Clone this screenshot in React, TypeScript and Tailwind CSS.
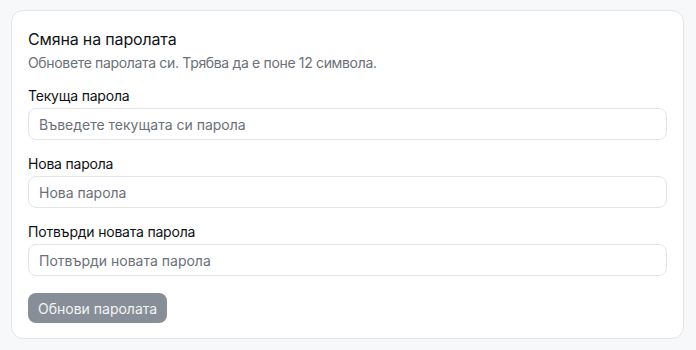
import React from "react";

const fields = [
  { label: "Текуща парола", placeholder: "Въведете текущата си парола" },
  { label: "Нова парола", placeholder: "Нова парола" },
  { label: "Потвърди новата парола", placeholder: "Потвърди новата парола" },
];

export default function App() {
  return (
    <div
      className="w-[696px] h-[350px] bg-[#f7f8f9] pl-[11px] pr-[12px] pt-[10px]"
      style={{ fontFamily: "Inter, 'Noto Sans', sans-serif" }}
    >
      <div className="bg-white border border-[#e3e5e8] rounded-[12px] px-4 pt-4 pb-[15px]">
        <h2 className="text-[16px] leading-6 text-[#111318] font-normal tracking-[-0.01em]">Смяна на паролата</h2>
        <p className="mt-[2px] text-[14px] leading-5 text-[#6b7079] tracking-[-0.024em]">
          Обновете паролата си. Трябва да е поне 12 символа.
        </p>
        <div className="mt-[13px] flex flex-col gap-[14px]">
          {fields.map((f) => (
            <div key={f.label} className="flex flex-col gap-[2px]">
              <label className="text-[14px] leading-5 text-[#0f1115] font-normal tracking-[-0.015em]">{f.label}</label>
              <input
                type="password"
                placeholder={f.placeholder}
                className="h-[32px] w-full rounded-[8px] border border-[#e3e5e8] bg-white px-[10px] text-[14px] placeholder:text-[#6b7079] outline-none"
              />
            </div>
          ))}
        </div>
        <button className="mt-[17px] h-[30px] px-[10px] rounded-[8px] bg-[#888e97] text-[14px] text-[#f3f4f6]">
          Обнови паролата
        </button>
      </div>
    </div>
  );
}
